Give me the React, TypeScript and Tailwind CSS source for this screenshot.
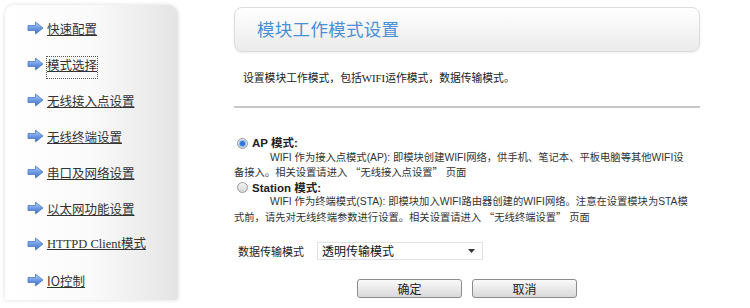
const MENU = [
  '快速配置',
  '模式选择',
  '无线接入点设置',
  '无线终端设置',
  '串口及网络设置',
  '以太网功能设置',
  'HTTPD Client模式',
  'IO控制',
]

function Arrow() {
  return (
    <svg width="17" height="14" viewBox="0 0 17 14" className="shrink-0">
      <defs>
        <linearGradient id="arw" x1="0" y1="0" x2="0" y2="1">
          <stop offset="0" stopColor="#b9d3f5" />
          <stop offset="0.5" stopColor="#6f9be0" />
          <stop offset="1" stopColor="#3b6fc8" />
        </linearGradient>
      </defs>
      <path d="M1 4.5 H8.5 V1 L16 7 L8.5 13 V9.5 H1 Z" fill="url(#arw)" stroke="#4a7acb" strokeWidth="0.8" strokeLinejoin="round" />
    </svg>
  )
}

function Radio({ checked }: { checked?: boolean }) {
  return (
    <span className="inline-flex w-[11px] h-[11px] rounded-full border border-[#9c9c9c] bg-gradient-to-b from-[#f4f4f4] to-[#d6d6d6] items-center justify-center shrink-0">
      {checked && <span className="w-[5px] h-[5px] rounded-full bg-[#2f74d6] shadow-[0_0_1px_1px_#7fb0ee]" />}
    </span>
  )
}

function Q({ children }: { children: string }) {
  return <span style={{ fontFamily: '"Noto Sans CJK SC", sans-serif' }}>{children}</span>
}

const btn =
  'w-[105px] h-[19px] rounded-[3px] border border-[#8c8c8c] bg-gradient-to-b from-[#fafafa] to-[#d9d9d9] text-[12px] text-[#222] leading-[17px] text-center'

export default function App() {
  return (
    <div className="w-[750px] h-[308px] bg-white flex overflow-hidden" style={{ fontFamily: '"Noto Sans CJK SC", sans-serif' }}>
      <div className="ml-[5px] mt-[5px] w-[173px] h-[295px] shrink-0 rounded-t-[10px] rounded-b-[3px] bg-gradient-to-r from-white via-[#fafafa] to-[#e4e4e4] shadow-[0_0_4px_rgba(0,0,0,0.15)] pt-[5px] flex flex-col">
        {MENU.map((m, i) => (
          <div key={m} className="h-[36px] shrink-0 flex items-center pl-[22px] gap-[3px]">
            <Arrow />
            <a
              href="#"
              className={
                'text-[12.5px] text-[#333] underline underline-offset-1 leading-[15px] ' +
                (i === 1 ? 'outline outline-1 outline-dotted outline-[#555] pb-[6px] -mb-[6px]' : '')
              }
              style={i === 6 ? { fontFamily: '"Liberation Serif", "Noto Sans CJK SC", serif' } : undefined}
            >
              {m}
            </a>
          </div>
        ))}
      </div>

      <div className="ml-[56px] w-[466px] shrink-0 flex flex-col">
        <div className="mt-[7px] h-[45px] shrink-0 rounded-[8px] border border-[#dcdcdc] bg-gradient-to-b from-white to-[#ebebeb] shadow-[0_1px_2px_rgba(0,0,0,0.08)] flex items-center pl-[22px]">
          <span className="text-[17.5px] text-[#4b8fd6] tracking-[0.3px]">模块工作模式设置</span>
        </div>

        <p
          className="mt-[19px] shrink-0 pl-[9px] text-[10.8px] leading-[14px] text-[#222] whitespace-nowrap"
          style={{ fontFamily: '"Liberation Serif", "Noto Sans CJK SC", serif' }}
        >
          设置模块工作模式，包括WIFI运作模式，数据传输模式。
        </p>

        <div className="mt-[21px] h-[2px] shrink-0 bg-[#c8c8c8]" />

        <div
          className="mt-[28px] shrink-0 text-[10.3px] leading-[14.5px] text-[#222] whitespace-nowrap"
          style={{ fontFamily: '"Liberation Sans", "Noto Sans CJK SC", sans-serif' }}
        >
          <div className="flex items-center gap-[4px] pl-[3px] h-[14.5px]">
            <Radio checked />
            <span className="font-bold text-[11.5px]">AP 模式:</span>
          </div>
          <div className="text-[#333]">
            <div className="pl-[36px]">WIFI 作为接入点模式(AP): 即模块创建WIFI网络，供手机、笔记本、平板电脑等其他WIFI设</div>
            <div>
              备接入。相关设置请进入 <Q>“</Q>无线接入点设置<Q>”</Q> 页面
            </div>
          </div>
          <div className="flex items-center gap-[4px] pl-[3px] h-[14.5px]">
            <Radio />
            <span className="font-bold text-[11.5px]">Station 模式:</span>
          </div>
          <div className="text-[#333]">
            <div className="pl-[36px]">WIFI 作为终端模式(STA): 即模块加入WIFI路由器创建的WIFI网络。注意在设置模块为STA模</div>
            <div>
              式前，请先对无线终端参数进行设置。相关设置请进入 <Q>“</Q>无线终端设置<Q>”</Q> 页面
            </div>
          </div>
        </div>

        <div className="mt-[17px] shrink-0 flex items-center pl-[4px]">
          <span className="w-[79px] text-[11px] text-[#222]">数据传输模式</span>
          <div className="w-[166px] h-[18px] border border-[#e2e2e2] bg-white flex items-center justify-between pl-[4px] pr-[7px]">
            <span className="text-[12px] text-[#111] leading-[16px]">透明传输模式</span>
            <svg width="7" height="4" viewBox="0 0 7 4">
              <path d="M0 0 H7 L3.5 4 Z" fill="#333" />
            </svg>
          </div>
        </div>

        <div className="mt-[19px] shrink-0 flex gap-[10px] pl-[123px]">
          <button className={btn}>确定</button>
          <button className={btn}>取消</button>
        </div>
      </div>
    </div>
  )
}
